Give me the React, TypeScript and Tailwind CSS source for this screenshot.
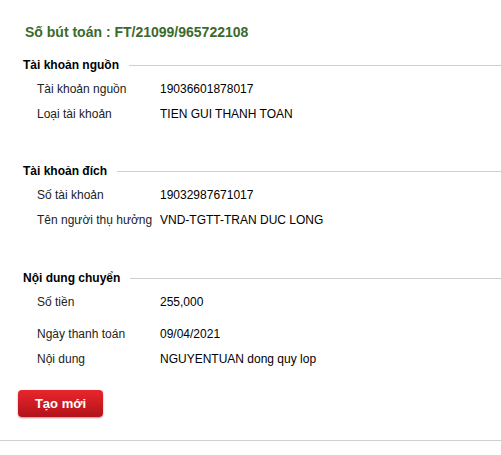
const sections = [
  {
    title: "Tài khoản nguồn",
    rows: [
      { label: "Tài khoản nguồn", value: "19036601878017" },
      { label: "Loại tài khoản", value: "TIEN GUI THANH TOAN" },
    ],
  },
  {
    title: "Tài khoản đích",
    rows: [
      { label: "Số tài khoản", value: "19032987671017" },
      { label: "Tên người thụ hưởng", value: "VND-TGTT-TRAN DUC LONG" },
    ],
  },
];

function SectionHeader({ title }: { title: string }) {
  return (
    <div className="flex items-center gap-[10px] pl-[23px]">
      <span className="font-bold text-[12px] text-black whitespace-nowrap">{title}</span>
      <div className="flex-1 h-px bg-[#cfcfcf]" />
    </div>
  );
}

function Row({ label, value, className = "" }: { label: string; value: string; className?: string }) {
  return (
    <div className={"flex items-center h-[25px] pl-[37px] text-[12px] " + className}>
      <span className="w-[123px] text-[#222]">{label}</span>
      <span className="text-black">{value}</span>
    </div>
  );
}

export default function App() {
  return (
    <div className="w-[501px] h-[455px] bg-white font-['Liberation_Sans',Arial,sans-serif] overflow-hidden">
      <h1 className="pt-[23px] pl-[25px] text-[14px] font-bold text-[#3b6a2e] leading-[18px]">
        Số bút toán : FT/21099/965722108
      </h1>

      {sections.map((s, i) => (
        <div key={i} className={i === 0 ? "mt-[15px]" : "mt-[36px]"}>
          <SectionHeader title={s.title} />
          <div className="mt-[2px]">
            {s.rows.map((r, j) => (
              <Row key={j} label={r.label} value={r.value} />
            ))}
          </div>
        </div>
      ))}

      <div className="mt-[37px]">
        <SectionHeader title="Nội dung chuyển" />
        <div className="mt-[2px]">
          <Row label="Số tiền" value="255,000" />
          <Row label="Ngày thanh toán" value="09/04/2021" className="mt-[7px]" />
          <Row label="Nội dung" value="NGUYENTUAN dong quy lop" />
        </div>
      </div>

      <div className="pl-[18px] mt-[19px]">
        <button className="w-[85px] h-[27px] rounded-[4px] bg-gradient-to-b from-[#e8262c] to-[#b3121a] text-white font-bold text-[13px] shadow-[0_1px_2px_rgba(0,0,0,0.4)]">
          Tạo mới
        </button>
      </div>

      <div className="mt-[23px] h-px bg-[#cfcfcf]" />
    </div>
  );
}
